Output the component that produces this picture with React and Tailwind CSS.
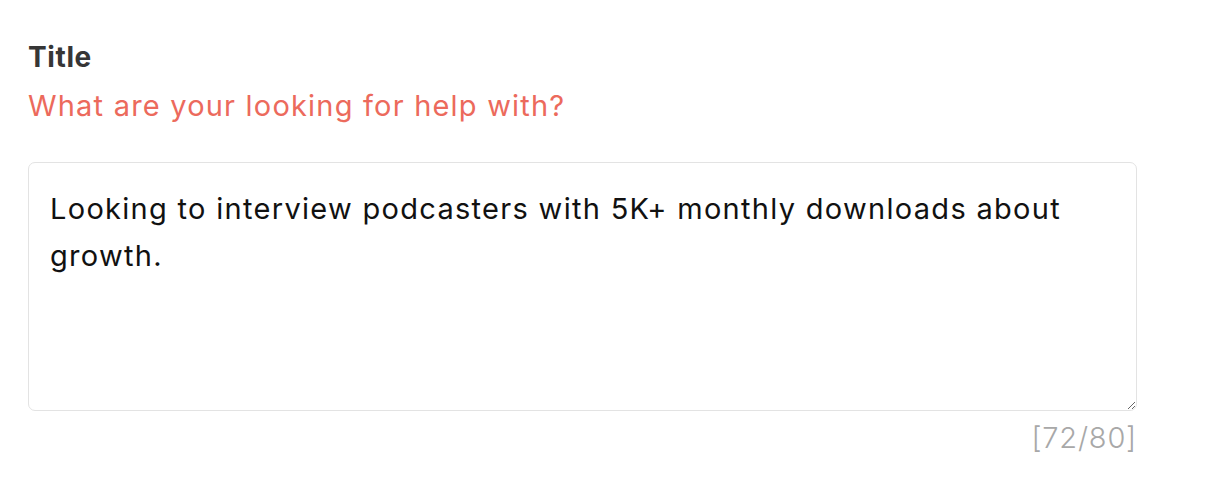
import React from "react";

export default function App() {
  return (
    <div className="w-[1218px] h-[504px] bg-white pl-[28px] pr-[81px] pt-[38px] font-['Inter',sans-serif]">
      <div className="text-[28px] font-bold leading-[38px] tracking-[0.6px] text-[#363636]">Title</div>
      <div className="text-[29px] leading-[38px] mt-[11px] tracking-[1.2px] text-[#ec6a5c]">
        What are your looking for help with?
      </div>
      <textarea
        className="block mt-[37px] w-full h-[249px] rounded-[7px] border border-[#e3e3e3] px-[21px] pt-[22px] font-['Inter',sans-serif] text-[29px] leading-[47px] tracking-[1.3px] text-[#111] outline-none resize-y"
        defaultValue="Looking to interview podcasters with 5K+ monthly downloads about growth."
      />
      <div className="text-right text-[29px] font-light leading-[36px] mt-[9px] tracking-[0.8px] text-[#a8a8a8]">[72/80]</div>
    </div>
  );
}
